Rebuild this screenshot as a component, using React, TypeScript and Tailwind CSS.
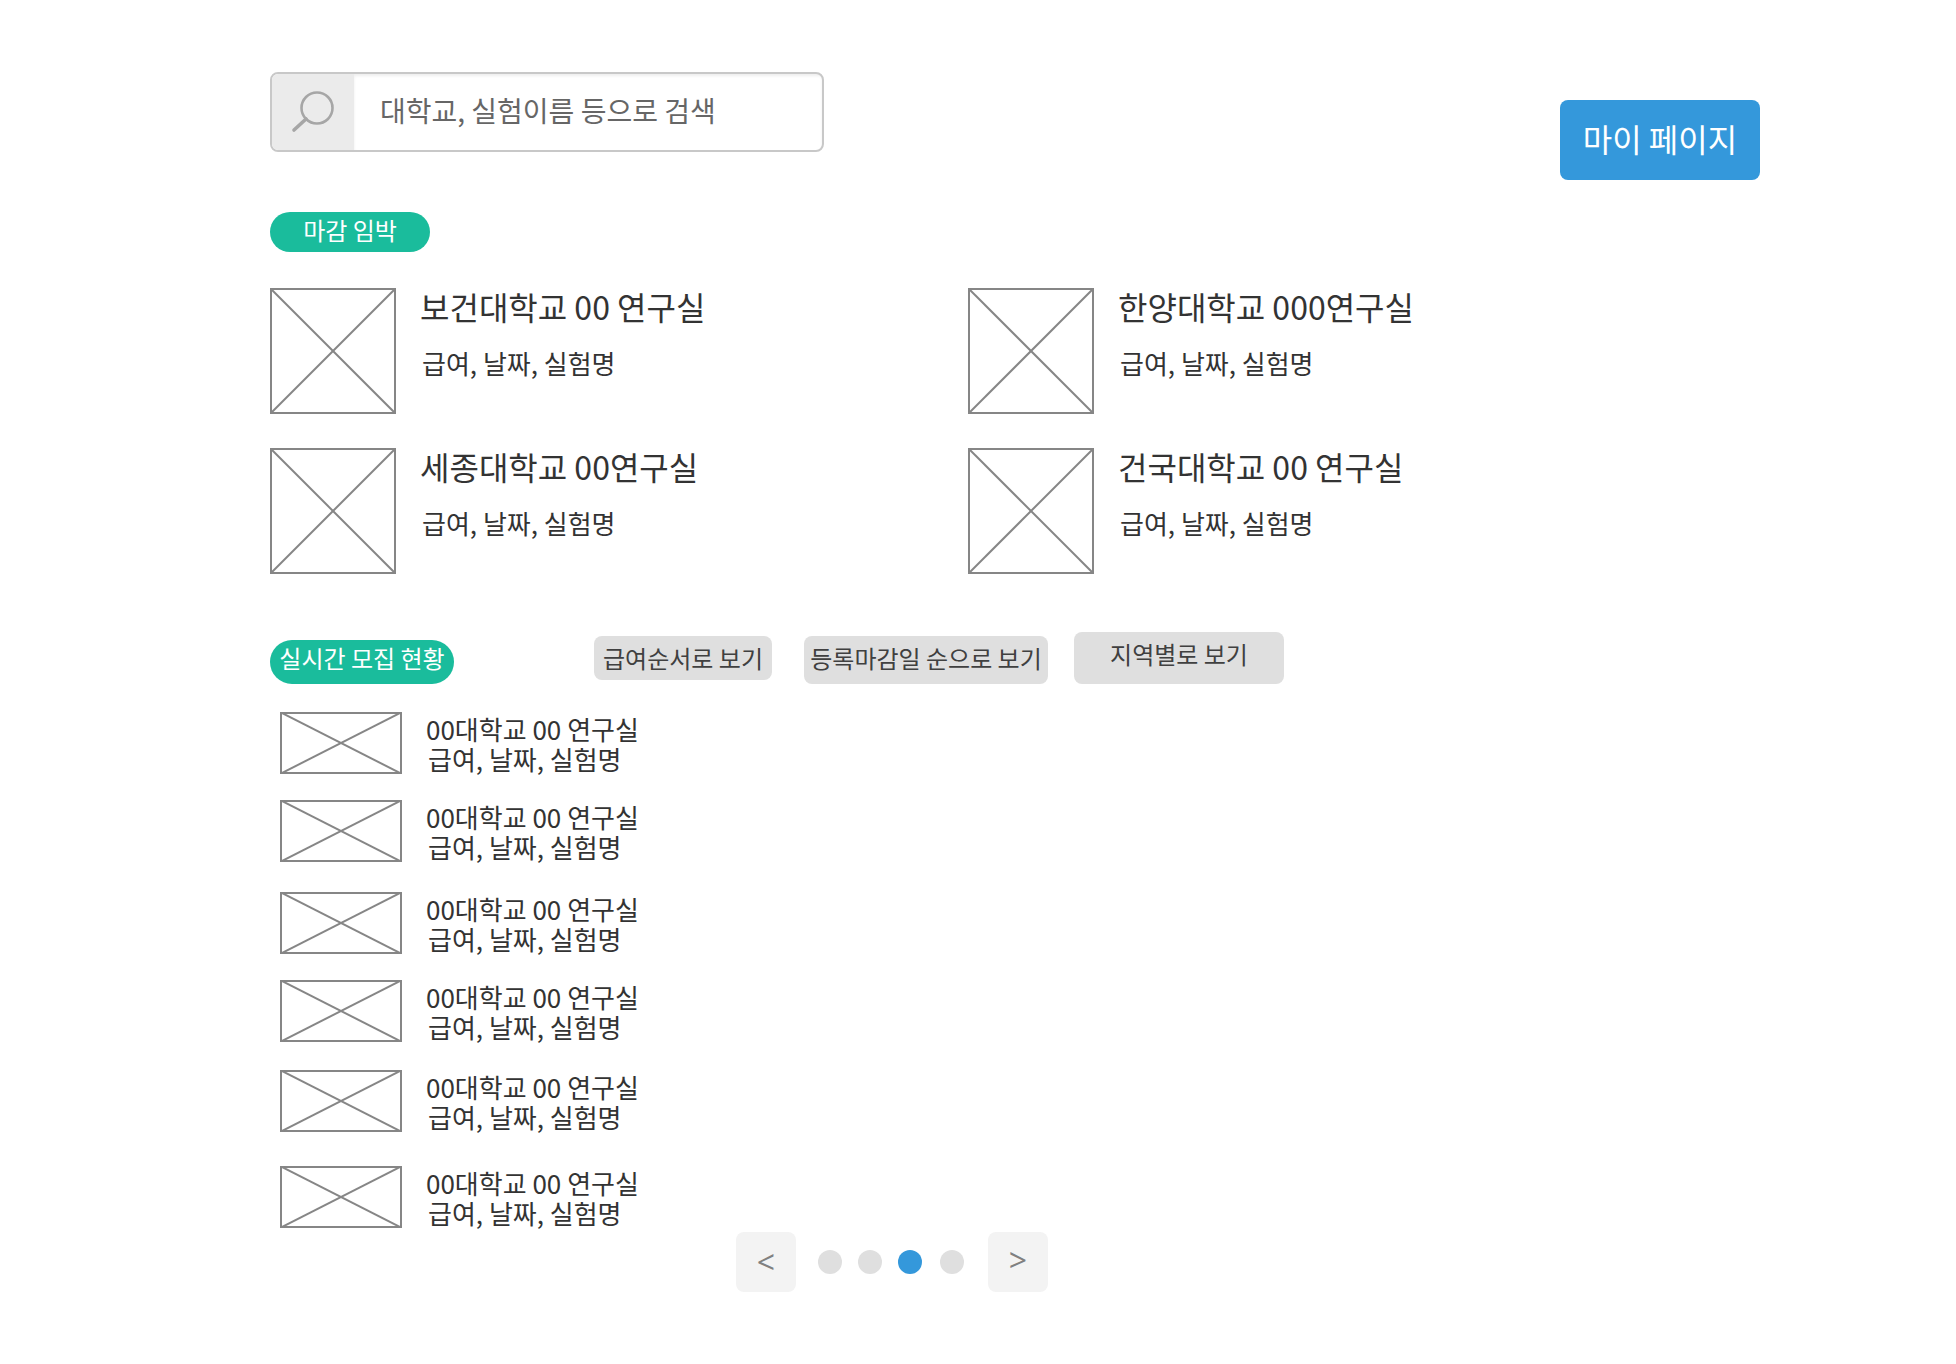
import { useState } from "react";

function Placeholder({ className }: { className: string }) {
  return (
    <svg className={className} aria-hidden="true">
      <rect x="1" y="1" className="h-[calc(100%-2px)] w-[calc(100%-2px)]" fill="#fff" stroke="#868686" strokeWidth="2" />
      <line x1="1%" y1="1%" x2="99%" y2="99%" stroke="#868686" strokeWidth="2" />
      <line x1="1%" y1="99%" x2="99%" y2="1%" stroke="#868686" strokeWidth="2" />
    </svg>
  );
}

const closing = ["보건대학교 00 연구실", "한양대학교 000연구실", "세종대학교 00연구실", "건국대학교 00 연구실"];

const listings = [
  { id: 1, gap: "mt-7" },
  { id: 2, gap: "mt-[26px]" },
  { id: 3, gap: "mt-[30px]" },
  { id: 4, gap: "mt-[26px]" },
  { id: 5, gap: "mt-7" },
  { id: 6, gap: "mt-[34px]" },
];

const sorts = [
  { label: "급여순서로 보기", box: "ml-[140px] min-w-[178px] pb-1" },
  { label: "등록마감일 순으로 보기", box: "ml-8 min-w-[244px] pb-2" },
  { label: "지역별로 보기", box: "-mt-1 ml-[26px] min-w-[210px] pb-3" },
];

const details = "급여, 날짜, 실험명";

export default function App() {
  const [page, setPage] = useState(2);

  return (
    <main className="min-h-screen bg-white pt-[72px] pr-[196px] pb-[72px] pl-[270px] font-['Noto_Sans_CJK_KR',sans-serif] text-[#333]">
      <header className="flex items-start justify-between">
        <form
          role="search"
          onSubmit={(e) => e.preventDefault()}
          className="flex h-20 w-[554px] overflow-hidden rounded-lg border-2 border-[#c8c8c8] bg-white"
        >
          <button type="submit" aria-label="검색" className="w-[82px] shrink-0 bg-[#ebebeb]">
            <svg viewBox="0 0 82 76" className="h-[76px] w-[82px]" fill="none" stroke="#a6a6a6" strokeLinecap="round">
              <circle cx="45" cy="34" r="15.5" strokeWidth="2.6" />
              <path d="M34 45 L22 56" strokeWidth="3.6" />
            </svg>
          </button>
          <input
            type="text"
            aria-label="대학교, 실험이름 등으로 검색"
            placeholder="대학교, 실험이름 등으로 검색"
            className="min-w-0 flex-1 px-[26px] pb-1 text-[28px] shadow-[inset_0_2px_3px_rgba(0,0,0,0.07)] outline-none placeholder:text-[#666]"
          />
        </form>
        <button type="button" className="mt-7 min-w-[200px] rounded-lg bg-[#3498db] pt-5 pb-6 text-[32px] leading-9 text-white">
          마이 페이지
        </button>
      </header>

      <section className="mt-8">
        <h2 className="w-40 rounded-full bg-[#1abc9c] pb-1 text-center text-2xl leading-9 text-white">마감 임박</h2>
        <ul className="mt-9 grid max-w-[1396px] grid-cols-2 gap-y-[34px]">
          {closing.map((name) => (
            <li key={name} className="flex gap-6">
              <Placeholder className="size-[126px] shrink-0" />
              <div>
                <h3 className="text-[32px] leading-9">{name}</h3>
                <p className="mt-[23px] pl-[2px] text-[26px] leading-8">{details}</p>
              </div>
            </li>
          ))}
        </ul>
      </section>

      <section className="mt-[62px]">
        <div className="flex items-start">
          <h2 className="mt-1 min-w-[184px] rounded-full bg-[#1abc9c] pb-2 text-center text-2xl leading-9 text-white">
            실시간 모집 현황
          </h2>
          {sorts.map((s) => (
            <button
              key={s.label}
              type="button"
              className={`rounded-lg bg-[#dfdfdf] pt-1 text-center text-2xl leading-9 text-[#404040] ${s.box}`}
            >
              {s.label}
            </button>
          ))}
        </div>
        <ul className="pl-[10px]">
          {listings.map(({ id, gap }) => (
            <li key={id} className={`flex gap-6 ${gap}`}>
              <Placeholder className="h-[62px] w-[122px] shrink-0" />
              <div className="text-[26px] leading-[30px]">
                <h3 className="pt-[2px]">00대학교 00 연구실</h3>
                <p className="pl-[2px]">{details}</p>
              </div>
            </li>
          ))}
        </ul>
      </section>

      <nav aria-label="페이지" className="mt-1 flex items-center pl-[466px] font-['Open_Sans',sans-serif] text-[32px] text-[#808080]">
        <button type="button" aria-label="이전" onClick={() => setPage(Math.max(0, page - 1))} className="size-[60px] rounded-lg bg-[#f3f3f3]">
          &lt;
        </button>
        <div className="flex gap-4 pr-6 pl-[22px]">
          {[0, 1, 2, 3].map((i) => (
            <button
              key={i}
              type="button"
              aria-label={`${i + 1} 페이지`}
              onClick={() => setPage(i)}
              className={`size-6 rounded-full last:ml-[2px] ${i === page ? "bg-[#3498db]" : "bg-[#dfdfdf]"}`}
            />
          ))}
        </div>
        <button type="button" aria-label="다음" onClick={() => setPage(Math.min(3, page + 1))} className="size-[60px] rounded-lg bg-[#f3f3f3] pb-1">
          &gt;
        </button>
      </nav>
    </main>
  );
}
